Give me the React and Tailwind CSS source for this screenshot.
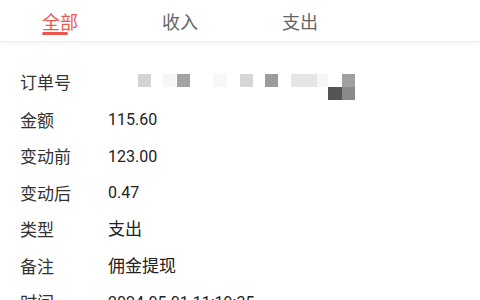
import React, { useState } from "react";

const tabs = ["全部", "收入", "支出", ""];

const rows = [
  { label: "金额", value: "115.60", num: true },
  { label: "变动前", value: "123.00", num: true },
  { label: "变动后", value: "0.47", num: true },
  { label: "类型", value: "支出" },
  { label: "备注", value: "佣金提现" },
  { label: "时间", value: "2024-05-01 11:19:35", num: true },
];

// pixelated order number: [left, top, width, height, colour]
const mosaic = [
  [138, 0, 13, 13, "#d4d4d4"],
  [163, 0, 13, 13, "#f6f6f6"],
  [177, 0, 13, 13, "#a3a3a3"],
  [213, 0, 14, 13, "#f8f8f8"],
  [240, 0, 13, 13, "#d6d6d6"],
  [265, 0, 13, 13, "#9c9c9c"],
  [291, 0, 26, 13, "#e6e6e6"],
  [317, 0, 11, 13, "#f6f6f6"],
  [342, 0, 13, 13, "#a0a0a0"],
  [328, 13, 14, 13, "#545454"],
  [342, 13, 13, 13, "#8a8a8a"],
];

const App = () => {
  const [active, setActive] = useState(0);

  return (
    <div
      className="w-[480px] h-[300px] overflow-hidden bg-white"
      style={{ fontFamily: '"Noto Sans", "Noto Sans CJK SC", sans-serif' }}
    >
      <div className="h-[42px] grid grid-cols-4 bg-white border-b border-[#ececec] shadow-[0_2px_3px_rgba(0,0,0,0.04)]">
        {tabs.map((t, i) => (
          <button
            key={i}
            onClick={() => t && setActive(i)}
            className={`relative flex items-center justify-center text-[18px] pt-[3px] ${
              active === i ? "text-[#e9574e]" : "text-[#666666]"
            }`}
          >
            {t}
            {active === i && t && (
              <span className="absolute left-[42px] top-[32px] w-[26px] h-[3px] rounded-full bg-[#e9574e]" />
            )}
          </button>
        ))}
      </div>

      <div className="pt-[22px] px-[20px] text-[17px] text-[#222222]">
        <div className="relative h-[38px] flex items-center">
          <span className="w-[88px] text-[#333333]">订单号</span>
          <div className="absolute left-[-20px] top-[10px] w-[480px] h-[26px]">
            {mosaic.map(([x, y, w, h, c], i) => (
              <span
                key={i}
                className="absolute"
                style={{ left: x, top: y, width: w, height: h, background: c }}
              />
            ))}
          </div>
        </div>
        {rows.map((r) => (
          <div key={r.label} className="h-[36.5px] flex items-center">
            <span className="w-[88px] text-[#333333]">{r.label}</span>
            <span
              className={r.num ? "text-[16px]" : "text-[17px]"}
              style={{ fontFamily: 'Roboto, "Noto Sans CJK SC", sans-serif' }}
            >
              {r.value}
            </span>
          </div>
        ))}
      </div>
    </div>
  );
};

export default App;
